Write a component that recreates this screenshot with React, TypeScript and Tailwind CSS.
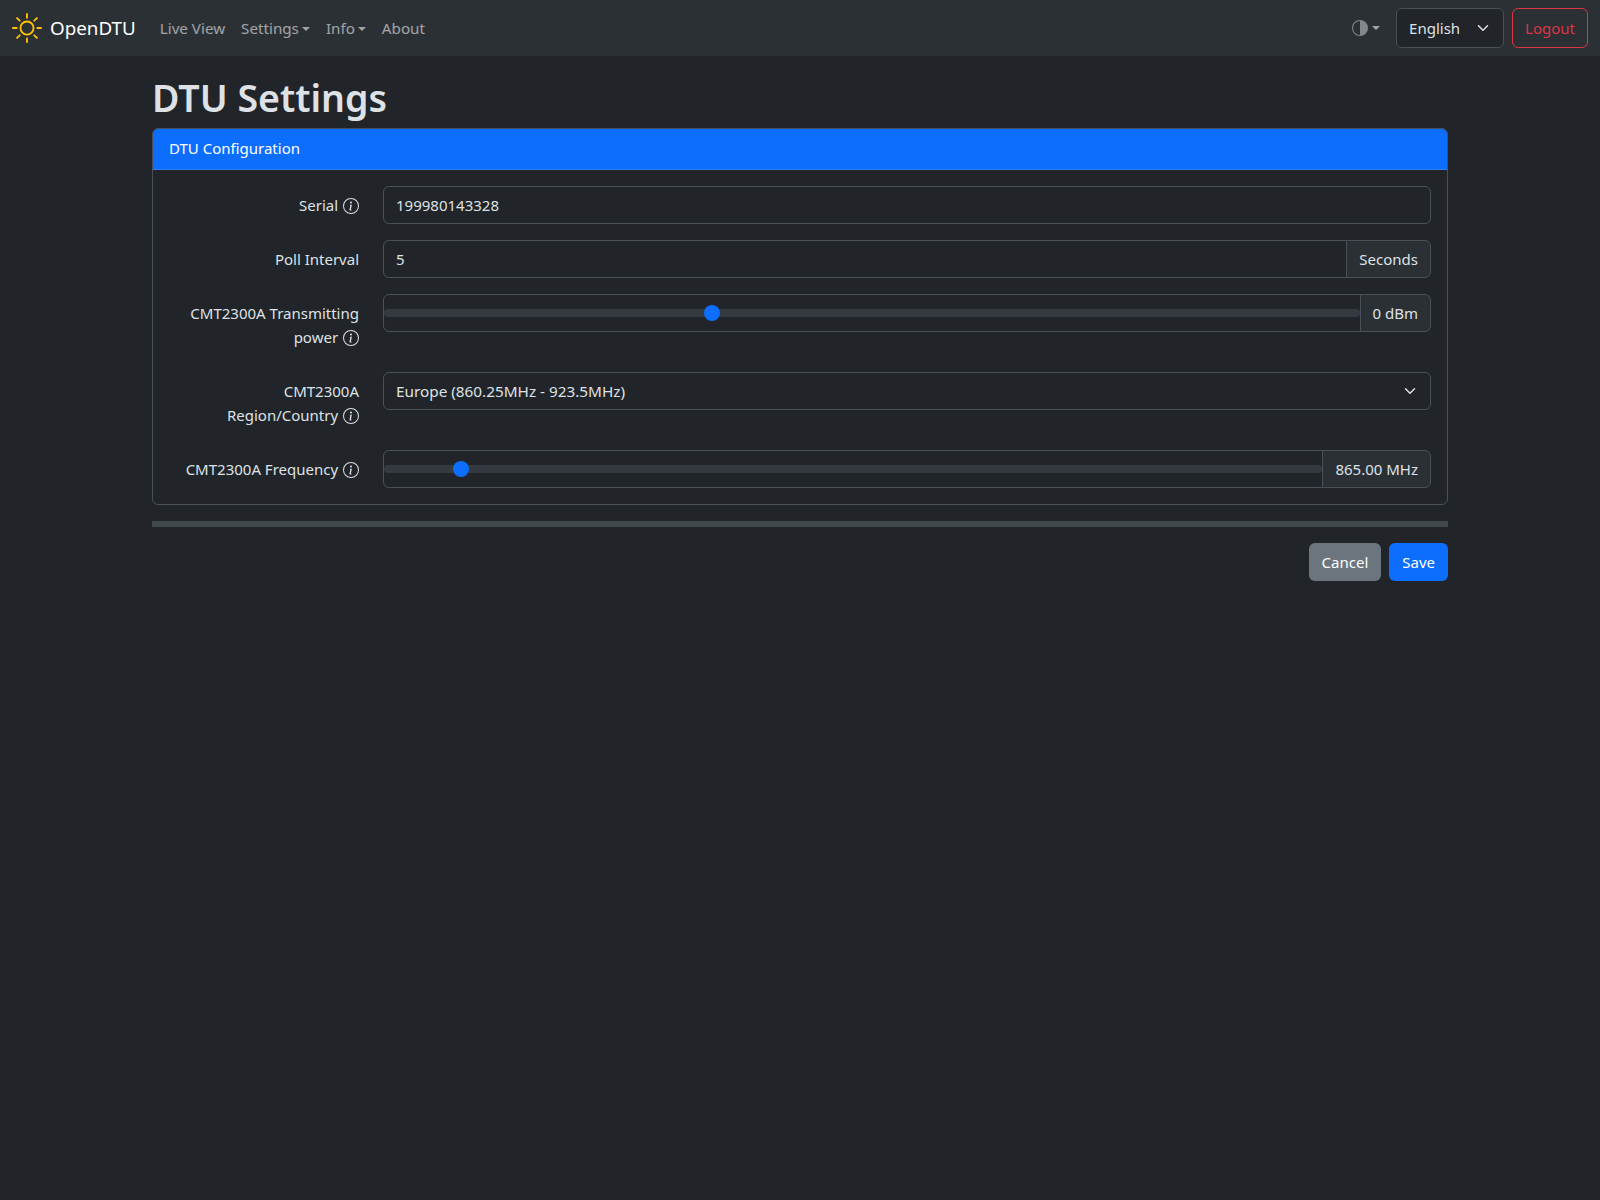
const font = "font-['Noto_Sans','Open_Sans',sans-serif]";

function InfoIcon() {
  return (
    <svg width="16" height="16" viewBox="0 0 16 16" fill="currentColor" className="inline-block align-[-3px] ml-[1px]">
      <path d="M8 15A7 7 0 1 1 8 1a7 7 0 0 1 0 14zm0 1A8 8 0 1 0 8 0a8 8 0 0 0 0 16z" />
      <path d="m8.93 6.588-2.29.287-.082.38.45.083c.294.07.352.176.288.469l-.738 3.468c-.194.897.105 1.319.808 1.319.545 0 1.178-.252 1.465-.598l.088-.416c-.2.176-.492.246-.686.246-.275 0-.375-.193-.304-.533L8.93 6.588zM9 4.5a1 1 0 1 1-2 0 1 1 0 0 1 2 0z" />
    </svg>
  );
}

function Caret() {
  return <span className="inline-block ml-[3px] align-[3px] border-x-[4.8px] border-t-[4.8px] border-x-transparent border-t-current" />;
}

function Chevron() {
  return (
    <svg width="12" height="12" viewBox="0 0 16 16" fill="none" stroke="#dee2e6" strokeWidth="2" strokeLinecap="round" strokeLinejoin="round">
      <path d="m2 5 6 6 6-6" />
    </svg>
  );
}

function Row({ label, info, last, children }: { label: React.ReactNode; info?: boolean; last?: boolean; children: React.ReactNode }) {
  return (
    <div className={last ? "flex -mx-3" : "flex -mx-3 mb-4"}>
      <label className="w-[214px] shrink-0 px-3 pt-[7px] pb-[7px] text-right leading-6">
        {label}
        {info && <> <InfoIcon /></>}
      </label>
      <div className="flex-1 px-3">{children}</div>
    </div>
  );
}

function Addon({ children }: { children: React.ReactNode }) {
  return (
    <span className="flex items-center px-3 -ml-px border border-[#495057] rounded-r-md bg-[#2b3035] whitespace-nowrap">
      {children}
    </span>
  );
}

function Slider({ thumb, addon }: { thumb: string; addon: string }) {
  return (
    <div className="flex h-[38px]">
      <div className="relative flex-1 flex items-center border border-[#495057] rounded-l-md">
        <div className="h-2 w-full rounded-full bg-[#343a40]" />
        <div className="absolute top-[10px] w-4 h-4 rounded-full bg-[#0d6efd]" style={{ left: thumb }} />
      </div>
      <Addon>{addon}</Addon>
    </div>
  );
}

export default function App() {
  return (
    <div className={`${font} min-h-[1200px] bg-[#212529] text-[#dee2e6] text-[15px] leading-6`}>
      <nav className="flex items-center h-14 px-3 bg-[#2b3035]">
        <a className="flex items-center text-[18.8px] text-white mr-4">
          <svg width="30" height="30" viewBox="0 0 16 16" fill="#ffc107" className="mr-2">
            <path d="M8 11a3 3 0 1 1 0-6 3 3 0 0 1 0 6zm0 1a4 4 0 1 0 0-8 4 4 0 0 0 0 8zM8 0a.5.5 0 0 1 .5.5v2a.5.5 0 0 1-1 0v-2A.5.5 0 0 1 8 0zm0 13a.5.5 0 0 1 .5.5v2a.5.5 0 0 1-1 0v-2A.5.5 0 0 1 8 13zm8-5a.5.5 0 0 1-.5.5h-2a.5.5 0 0 1 0-1h2a.5.5 0 0 1 .5.5zM3 8a.5.5 0 0 1-.5.5h-2a.5.5 0 0 1 0-1h2A.5.5 0 0 1 3 8zm10.657-5.657a.5.5 0 0 1 0 .707l-1.414 1.415a.5.5 0 1 1-.707-.708l1.414-1.414a.5.5 0 0 1 .707 0zm-9.193 9.193a.5.5 0 0 1 0 .707L3.05 13.657a.5.5 0 0 1-.707-.707l1.414-1.414a.5.5 0 0 1 .707 0zm9.193 2.121a.5.5 0 0 1-.707 0l-1.414-1.414a.5.5 0 0 1 .707-.707l1.414 1.414a.5.5 0 0 1 0 .707zM4.464 4.465a.5.5 0 0 1-.707 0L2.343 3.05a.5.5 0 1 1 .707-.707l1.414 1.414a.5.5 0 0 1 0 .708z" />
          </svg>
          OpenDTU
        </a>
        <div className="flex text-white/55 text-[15.2px]">
          <a className="px-2">Live View</a>
          <a className="px-2">Settings<Caret /></a>
          <a className="px-2">Info<Caret /></a>
          <a className="px-2">About</a>
        </div>
        <div className="flex items-center ml-auto">
          <a className="flex items-center px-2 text-white/55">
            <svg width="16" height="16" viewBox="0 0 16 16" fill="#85888b" className="mr-[1px]">
              <path d="M8 15A7 7 0 1 1 8 1v14zm0 1A8 8 0 1 0 8 0a8 8 0 0 0 0 16z" />
            </svg>
            <Caret />
          </a>
          <div className="flex items-center justify-between w-[108px] h-10 ml-2 pl-3 pr-[14px] rounded-md border border-[#495057] bg-[#212529]">
            English
            <Chevron />
          </div>
          <button className="h-10 ml-2 px-3 rounded-md border border-[#dc3545] text-[#dc3545]">Logout</button>
        </div>
      </nav>

      <main className="w-[1296px] mx-auto">
        <h1 className="mt-[18px] mb-[6px] text-[37.5px] font-semibold leading-[48px]">DTU Settings</h1>
        <section className="border border-[#495057] rounded-md">
          <header className="h-[41px] flex items-center px-4 pb-[2px] border-b border-[#2f80fb] rounded-t-[5px] bg-[#0d6efd] text-white">DTU Configuration</header>
          <div className="p-4">
            <Row label="Serial" info>
              <div className="flex items-center h-[38px] px-3 rounded-md border border-[#495057]">199980143328</div>
            </Row>
            <Row label="Poll Interval">
              <div className="flex h-[38px]">
                <div className="flex-1 flex items-center px-3 rounded-l-md border border-[#495057]">5</div>
                <Addon>Seconds</Addon>
              </div>
            </Row>
            <Row label="CMT2300A Transmitting power" info>
              <Slider thumb="32.8%" addon="0 dBm" />
            </Row>
            <Row label="CMT2300A Region/Country" info>
              <div className="flex items-center justify-between h-[38px] pl-3 pr-[14px] rounded-md border border-[#495057]">
                <span className="text-[15.3px]">Europe (860.25MHz - 923.5MHz)</span>
                <Chevron />
              </div>
            </Row>
            <Row label="CMT2300A Frequency" info last>
              <Slider thumb="7.4%" addon="865.00 MHz" />
            </Row>
          </div>
        </section>
        <hr className="my-4 h-[6px] border-0 bg-[#41484c]" />
        <div className="flex justify-end gap-2">
          <button className="h-[38px] px-[13px] rounded-md bg-[#6c757d] text-white">Cancel</button>
          <button className="h-[38px] px-[13px] rounded-md bg-[#0d6efd] text-white">Save</button>
        </div>
      </main>
    </div>
  );
}
